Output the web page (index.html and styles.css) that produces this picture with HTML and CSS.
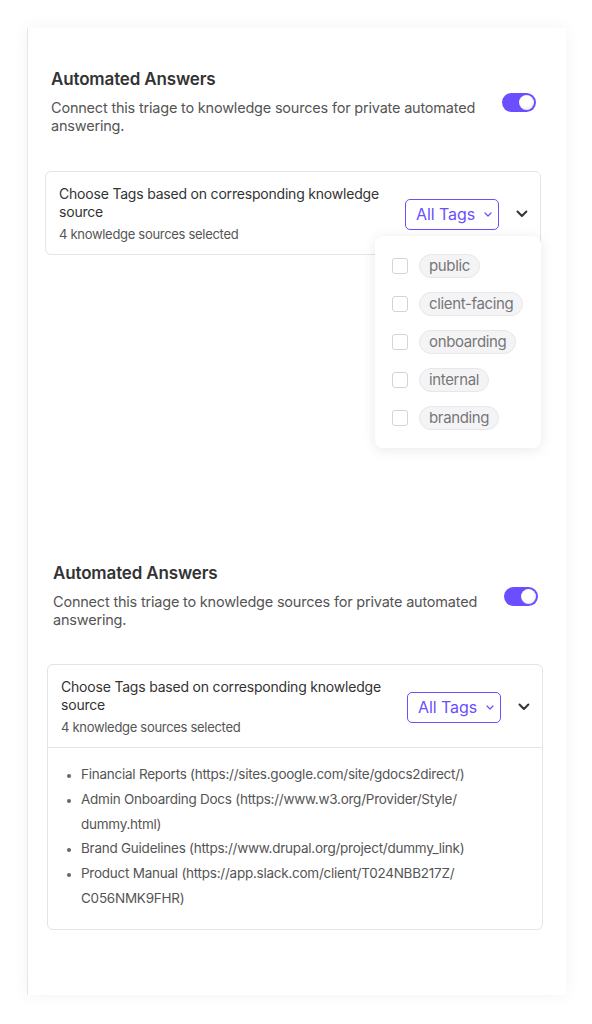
FILE: index.html
```html
<!DOCTYPE html>
<html>
<head>
<meta charset="utf-8">
<link rel="stylesheet" href="styles.css">
</head>
<body>
<div class="panel">
  <section class="block">
    <div class="head">
      <div class="head-text">
        <h2 class="title">Automated Answers</h2>
        <p class="desc">Connect this triage to knowledge sources for private automated answering.</p>
      </div>
      <div class="toggle"><span class="knob"></span></div>
    </div>
    <div class="card">
      <div class="card-head">
        <div class="card-text">
          <div class="card-title">Choose Tags based on corresponding knowledge source</div>
          <div class="card-sub">4 knowledge sources selected</div>
        </div>
        <button class="tags-btn">All Tags
          <svg class="mini-chev" width="8" height="5" viewBox="0 0 8 5"><path d="M1 1l3 3 3-3" fill="none" stroke="#6b4eff" stroke-width="1.2" stroke-linecap="round" stroke-linejoin="round"/></svg>
        </button>
        <svg class="chev" width="12" height="8" viewBox="0 0 12 8"><path d="M1.5 1.5l4.5 4.5 4.5-4.5" fill="none" stroke="#333" stroke-width="2" stroke-linecap="round" stroke-linejoin="round"/></svg>
      </div>
      <div class="menu">
        <div class="opt"><span class="check"></span><span class="pill">public</span></div>
        <div class="opt"><span class="check"></span><span class="pill">client-facing</span></div>
        <div class="opt"><span class="check"></span><span class="pill">onboarding</span></div>
        <div class="opt"><span class="check"></span><span class="pill">internal</span></div>
        <div class="opt"><span class="check"></span><span class="pill">branding</span></div>
      </div>
    </div>
  </section>

  <section class="block second">
    <div class="head">
      <div class="head-text">
        <h2 class="title">Automated Answers</h2>
        <p class="desc">Connect this triage to knowledge sources for private automated answering.</p>
      </div>
      <div class="toggle"><span class="knob"></span></div>
    </div>
    <div class="card">
      <div class="card-head">
        <div class="card-text">
          <div class="card-title">Choose Tags based on corresponding knowledge source</div>
          <div class="card-sub">4 knowledge sources selected</div>
        </div>
        <button class="tags-btn">All Tags
          <svg class="mini-chev" width="8" height="5" viewBox="0 0 8 5"><path d="M1 1l3 3 3-3" fill="none" stroke="#6b4eff" stroke-width="1.2" stroke-linecap="round" stroke-linejoin="round"/></svg>
        </button>
        <svg class="chev" width="12" height="8" viewBox="0 0 12 8"><path d="M1.5 1.5l4.5 4.5 4.5-4.5" fill="none" stroke="#333" stroke-width="2" stroke-linecap="round" stroke-linejoin="round"/></svg>
      </div>
      <ul class="sources">
        <li>Financial Reports (https://sites.google.com/site/gdocs2direct/)</li>
        <li>Admin Onboarding Docs (https://www.w3.org/Provider/Style/<wbr>dummy.html)</li>
        <li>Brand Guidelines (https://www.drupal.org/project/dummy_link)</li>
        <li>Product Manual (https://app.slack.com/client/T024NBB217Z/<wbr>C056NMK9FHR)</li>
      </ul>
    </div>
  </section>
</div>
</body>
</html>
```

FILE: styles.css
```css
* { box-sizing: border-box; }
html, body { margin: 0; padding: 0; background: #fff; }
body {
  font-family: Inter, "Noto Sans", sans-serif;
  color: #333;
  padding: 28px 0 29px 27px;
}
.panel {
  width: 539px;
  height: 967px;
  background: #fff;
  border-left: 1px solid #e6e6e6;
  box-shadow: 0 0 16px rgba(0,0,0,0.05);
  padding: 41px 0 0 17px;
}
.block { width: 496px; }
.block.second { margin: 308px 0 0 2px; }
.head {
  display: flex;
  align-items: center;
  justify-content: space-between;
  padding: 0 5px 0 6px;
}
.title {
  margin: 0;
  font-size: 17px;
  line-height: 20px;
  font-weight: 600;
  color: #333;
  letter-spacing: -0.15px;
}
.desc {
  margin: 10px 0 0;
  width: 440px;
  font-size: 14.5px;
  line-height: 18px;
  color: #555;
  letter-spacing: -0.2px;
}
.toggle {
  width: 34px;
  height: 19px;
  border-radius: 10px;
  background: #6b4eff;
  display: flex;
  align-items: center;
  justify-content: flex-end;
  padding: 2px;
}
.knob {
  width: 15px;
  height: 15px;
  border-radius: 50%;
  background: radial-gradient(circle at 45% 40%, #fff 40%, #e2e2e6 100%);
}
.card {
  position: relative;
  margin-top: 36px;
  border: 1px solid #e4e4e7;
  border-radius: 6px;
  background: #fff;
}
.second .card { margin-top: 35px; }
.card-head {
  display: flex;
  align-items: center;
  padding: 13px 12px 11px 13px;
}
.card-text { width: 340px; margin-right: 10px; }
.card-title { font-size: 14px; line-height: 18px; color: #333; letter-spacing: -0.2px; }
.card-sub { margin-top: 4px; font-size: 13px; line-height: 18px; color: #555; letter-spacing: -0.3px; }
.tags-btn {
  display: flex;
  align-items: center;
  width: 95px;
  height: 31px;
  padding: 0 0 0 10px;
  border: 1.5px solid #6b4eff;
  border-radius: 5px;
  background: #fff;
  color: #6b4eff;
  font-family: Inter, "Noto Sans", sans-serif;
  font-size: 16px;
  letter-spacing: -0.1px;
}
.mini-chev { margin-left: 9px; }
.chev { margin-left: 17px; }
.menu {
  position: absolute;
  top: 64px;
  right: -1px;
  width: 166px;
  padding: 11px 0;
  background: #fff;
  border-radius: 8px;
  box-shadow: 0 2px 14px rgba(0,0,0,0.09);
  z-index: 2;
}
.opt {
  height: 38px;
  display: flex;
  align-items: center;
  padding-left: 17px;
}
.check {
  width: 16px;
  height: 16px;
  border: 1px solid #d4d4d8;
  border-radius: 3px;
  margin-right: 11px;
}
.pill {
  height: 24px;
  line-height: 22px;
  padding: 0 9px;
  border: 1px solid #e7e7ea;
  border-radius: 12px;
  background: #f4f4f6;
  color: #777;
  font-size: 15px;
  letter-spacing: -0.35px;
}
.sources {
  margin: 0;
  border-top: 1px solid #e4e4e7;
  padding: 14px 66px 18px 33px;
  font-size: 13.5px;
  line-height: 24.8px;
  color: #555;
  letter-spacing: -0.25px;
}
.sources li { padding-left: 0; }
.sources li::marker { font-size: 11px; color: #666; }
```
